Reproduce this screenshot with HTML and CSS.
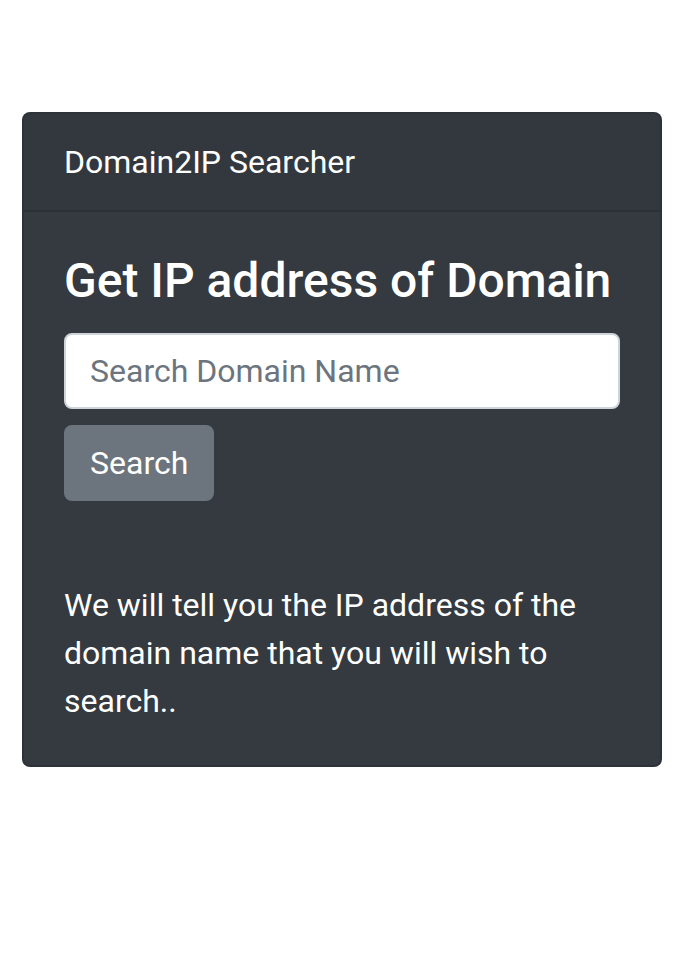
FILE: index.html
```html
<!DOCTYPE html>
<html lang="en">
<head>
<meta charset="utf-8">
<title>Domain2IP Searcher</title>
<link rel="stylesheet" href="styles.css">
</head>
<body>
<div class="page">
  <div class="card">
    <div class="card-header">Domain2IP Searcher</div>
    <div class="card-body">
      <h4 class="card-title">Get IP address of Domain</h4>
      <form class="search-form">
        <input class="form-control" type="text" placeholder="Search Domain Name">
        <button class="btn" type="button">Search</button>
      </form>
      <p class="card-text">We will tell you the IP address of the domain name that you will wish to search..</p>
    </div>
  </div>
</div>
</body>
</html>
```
FILE: styles.css
```css
* { box-sizing: border-box; }
html, body { margin: 0; padding: 0; background: #fff; }
body {
  font-family: Roboto, "Liberation Sans", Arial, sans-serif;
  font-size: 32px;
  line-height: 48px;
  color: #fff;
}
.page {
  padding: 112px 0 0 22px;
}
.card {
  width: 640px;
  background: #343a40;
  border: 2px solid rgba(0, 0, 0, 0.125);
  border-radius: 8px;
  overflow: hidden;
}
.card-header {
  padding: 24px 40px;
  background: rgba(0, 0, 0, 0.03);
  border-bottom: 2px solid rgba(0, 0, 0, 0.125);
}
.card-body {
  padding: 40px;
}
.card-title {
  margin: 0 0 23px;
  font-size: 48px;
  line-height: 57.6px;
  font-weight: 500;
}
.search-form {
  display: flex;
  flex-direction: column;
  align-items: flex-start;
  gap: 16px;
}
.form-control {
  display: block;
  width: 100%;
  height: 76px;
  padding: 12px 24px;
  font-family: inherit;
  font-size: 32px;
  line-height: 48px;
  color: #495057;
  background: #fff;
  border: 2px solid #ced4da;
  border-radius: 8px;
  outline: none;
}
.form-control::placeholder { color: #6c757d; opacity: 1; }
.btn {
  height: 76px;
  padding: 12px 24px;
  font-family: inherit;
  font-size: 32px;
  line-height: 48px;
  color: #fff;
  background: #6c757d;
  border: 2px solid #6c757d;
  border-radius: 8px;
}
.card-text {
  margin: 80px 0 0;
}
```
